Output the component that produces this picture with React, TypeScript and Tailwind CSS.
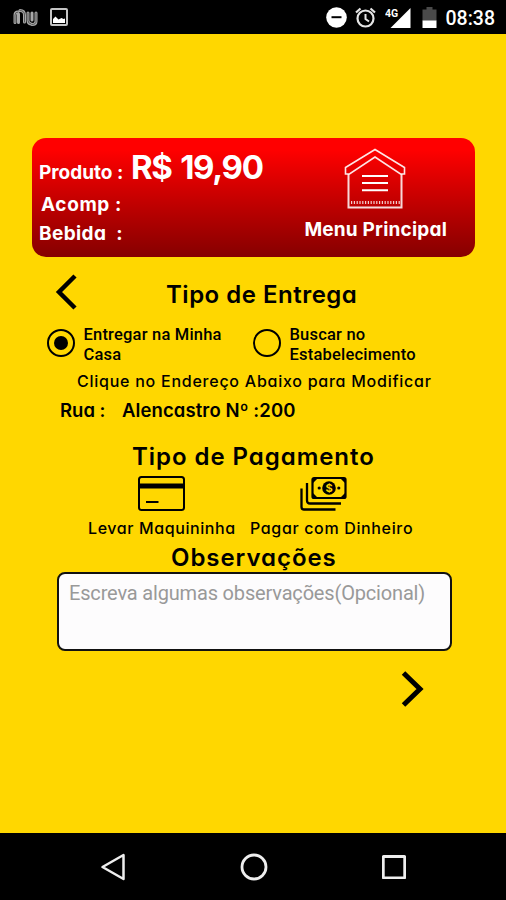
import { useState } from "react";

type Delivery = "casa" | "loja";

const DELIVERY_OPTIONS: { value: Delivery; lines: [string, string] }[] = [
  { value: "casa", lines: ["Entregar na Minha", "Casa"] },
  { value: "loja", lines: ["Buscar no", "Estabelecimento"] },
];

function StatusBar() {
  return (
    <header className="flex h-[34px] shrink-0 items-center bg-black pl-3 pr-[11px]">
      <svg className="mr-[11px] h-5 w-[27px]" viewBox="0 0 27 20" fill="none">
        <g strokeLinecap="round" strokeLinejoin="round">
          <path
            d="M3 15.500V8q0-3 3-3M8 3.500q4.500 0 4.500 4.500v7M6.500 15.500V7M16 6v7.500q0 3 3 3.500M24 6v8.500q0 3-4 3M20 6v7"
            stroke="#a8a8a8"
            strokeWidth="3"
          />
          <path
            d="M3 15.500V8q0-3 3-3M8 3.500q4.500 0 4.500 4.500v7M16 6v7.500q0 3 3 3.500M24 6v8.500q0 3-4 3"
            stroke="#444"
            strokeWidth="0.800"
          />
        </g>
      </svg>
      <svg className="size-[18px]" viewBox="0 0 18 18" fill="none">
        <rect x="1" y="1" width="16" height="16" rx="1" stroke="#c4c4c4" strokeWidth="2" />
        <path d="M3 15v-4l2.500-2.500 3 3 3-1.500 2 1 1.500-.5V15z" fill="#fff" />
      </svg>
      <div className="ml-auto flex items-center">
        <svg className="mr-2 size-[21px]" viewBox="0 0 21 21">
          <circle cx="10.500" cy="10.500" r="10.300" fill="#fff" />
          <path d="M5.500 10.200h10" stroke="#000" strokeWidth="2" />
        </svg>
        <svg className="mr-[9px] h-[21px] w-[21px]" viewBox="0 0 21 21" fill="none" stroke="#e5e5e5">
          <circle cx="10.500" cy="11.500" r="8" strokeWidth="2.200" />
          <path d="M10.500 7v5l3.500 2.500" strokeWidth="2" />
          <path d="M1 5.500 5.500 1.500M20 5.500l-4.500-4" strokeWidth="2.200" />
        </svg>
        <svg className="mr-[11px] h-[21px] w-[26px]" viewBox="0 0 26 21">
          <path d="M5.500 21 25.500 1v20z" fill="#fff" />
          <text
            x="0"
            y="9.500"
            fill="#fff"
            stroke="#000"
            strokeWidth="1"
            paintOrder="stroke"
            className="font-['Roboto',sans-serif] text-[10.500px] font-bold"
          >
            4G
          </text>
        </svg>
        <svg className="mr-[9px] h-[21px] w-[15px]" viewBox="0 0 15 21">
          <path d="M.5 2.500h4V0h6v2.500h4V14H.5z" fill="#4a4a4a" />
          <path d="M.5 13.500h14V21H.5z" fill="#fff" />
        </svg>
        <span className="mt-[3px] font-['Roboto',sans-serif] text-[19.500px] font-medium leading-none text-white">
          08:38
        </span>
      </div>
    </header>
  );
}

function HouseIcon() {
  return (
    <svg className="mr-0.5 h-[62px] w-[62px]" viewBox="0 0 62 62" fill="none" stroke="#fff" strokeWidth="1.600">
      <path d="M31 1.500 60.500 19.500v6.500H56.500L31 9 5.500 26H1.500v-6.500z" opacity=".9" />
      <path d="M4.500 26v33.500h53V26" strokeWidth="2" opacity=".85" />
      <path d="M18 28h26M18 35h26M18 42.300h26" strokeWidth="2" />
      <path d="M7 54.500h49" strokeWidth="3" strokeDasharray="1.200 1.600" opacity=".8" />
    </svg>
  );
}

function OrderCard() {
  return (
    <section className="ml-8 mr-[31px] flex h-[119px] justify-between rounded-[14px] bg-linear-to-b from-[#ff0000] from-10% to-[#860000] pl-[7px] pr-7 font-bold text-white">
      <div className="flex flex-col pt-3 text-[19px] leading-5">
        <div className="flex h-[34px] items-baseline leading-[34px]">
          <span className="w-[92px] whitespace-nowrap">Produto :</span>
          <span className="whitespace-nowrap text-[33px] tracking-[-1.300px] [word-spacing:2px]">
            R$ 19,90
          </span>
        </div>
        <span className="mt-[11px] whitespace-pre pl-0.5 tracking-[0.600px]">Acomp :</span>
        <span className="mt-[9px] whitespace-pre tracking-[0.400px]">Bebida  :</span>
      </div>
      <button type="button" className="flex flex-col items-center pt-2.5">
        <HouseIcon />
        <span className="mt-2.5 whitespace-nowrap text-[19px] leading-5 tracking-[0.200px]">
          Menu Principal
        </span>
      </button>
    </section>
  );
}

function CardIcon() {
  return (
    <svg className="h-[35px] w-[47px]" viewBox="0 0 47 35" fill="none" stroke="#000">
      <rect x="1" y="1" width="45" height="33" rx="2.500" strokeWidth="2" />
      <path d="M1 10h45" strokeWidth="5" />
      <path d="M8 26h12.500" strokeWidth="2" />
    </svg>
  );
}

function MoneyIcon() {
  return (
    <svg className="h-[35px] w-[47px]" viewBox="0 0 47 35" fill="none" stroke="#000" strokeWidth="2">
      <rect x="12.500" y="2" width="33" height="20" rx="1.500" strokeWidth="2.200" />
      <path d="M12 2h6l-6 6zM46 2v6l-6-6zM12 22v-6l6 6zM46 22h-6l6-6z" fill="#000" strokeWidth="0" />
      <circle cx="29" cy="12" r="6.800" fill="#000" stroke="none" />
      <text
        x="29"
        y="16"
        textAnchor="middle"
        fill="#ffd700"
        stroke="none"
        className="font-['Inter',sans-serif] text-[11px] font-bold"
      >
        $
      </text>
      <circle cx="19.200" cy="12" r="1.600" fill="#000" stroke="none" />
      <circle cx="38.800" cy="12" r="1.600" fill="#000" stroke="none" />
      <path d="M7 7v17.500q0 3 3 3h31" strokeWidth="2.300" />
      <path d="M1.500 12.500V31q0 2.500 2.500 2.500h31.500" strokeWidth="2.300" />
    </svg>
  );
}

function NavBar() {
  return (
    <nav className="flex h-[67px] shrink-0 items-center justify-between bg-black pl-[100px] pr-[100px]">
      <svg className="h-7 w-[25px]" viewBox="0 0 25 28" fill="none" stroke="#eee" strokeWidth="2.500">
        <path d="M2.500 14 23.500 2v24z" strokeLinejoin="round" />
      </svg>
      <svg className="size-7" viewBox="0 0 28 28" fill="none" stroke="#eee" strokeWidth="2.800">
        <circle cx="14" cy="14" r="12" />
      </svg>
      <svg className="size-6" viewBox="0 0 24 24" fill="none" stroke="#eee" strokeWidth="2.800">
        <rect x="1.300" y="1.500" width="21.400" height="21.400" rx=".5" />
      </svg>
    </nav>
  );
}

export default function App() {
  const [delivery, setDelivery] = useState<Delivery>("casa");
  const [notes, setNotes] = useState("");

  return (
    <div className="flex h-[900px] w-[506px] flex-col overflow-hidden bg-[#ffd700] font-['Inter',sans-serif] text-black [font-feature-settings:'cv11']">
      <StatusBar />
      <main className="flex flex-1 flex-col pt-[104px]">
        <OrderCard />

        <div className="mt-[17px] flex h-9 items-center pl-[55px]">
          <button type="button" aria-label="Voltar">
            <svg className="h-9 w-6" viewBox="0 0 24 36" fill="none" stroke="#000" strokeWidth="4.500">
              <path d="M20 2 4 18l16 16" />
            </svg>
          </button>
          <h2 className="ml-[87px] mt-1.5 whitespace-nowrap text-[24px] font-semibold leading-none tracking-[0.500px]">
            Tipo de Entrega
          </h2>
        </div>

        <div className="mt-[15px] grid grid-cols-[206px_1fr] pl-[47px]">
          {DELIVERY_OPTIONS.map((option) => (
            <button
              key={option.value}
              type="button"
              role="radio"
              aria-checked={delivery === option.value}
              onClick={() => setDelivery(option.value)}
              className="flex items-center text-left font-['Roboto',sans-serif] text-[16.500px] font-medium leading-[19.500px] tracking-[0.200px]"
            >
              <span className="mr-2 mt-[-3px] flex size-7 shrink-0 items-center justify-center rounded-full border-[2.500px] border-black">
                {delivery === option.value && <span className="size-3.5 rounded-full bg-black" />}
              </span>
              <span className="whitespace-nowrap pl-[0.500px]">
                {option.lines[0]}
                <br />
                {option.lines[1]}
              </span>
            </button>
          ))}
        </div>

        <p className="mt-[7px] whitespace-nowrap pl-[77px] text-[16px] font-medium leading-5 tracking-[0.750px]">
          Clique no Endereço Abaixo para Modificar
        </p>
        <p className="mt-[9px] flex whitespace-nowrap pl-[60px] text-[18.500px] font-semibold leading-5">
          <span className="w-[62px]">Rua :</span>
          <span className="tracking-[0.100px]">Alencastro Nº :200</span>
        </p>

        <h2 className="mt-[22px] whitespace-nowrap pl-[132px] text-[24px] font-semibold leading-[30px] tracking-[0.950px]">
          Tipo de Pagamento
        </h2>
        <div className="mt-1 flex pl-[88px] text-[16px] font-medium leading-5">
          <button type="button" className="flex w-[162px] flex-col items-start">
            <span className="pl-[50px]">
              <CardIcon />
            </span>
            <span className="mt-[7px] whitespace-nowrap tracking-[0.600px]">Levar Maquininha</span>
          </button>
          <button type="button" className="flex flex-col items-start">
            <span className="pl-[50px]">
              <MoneyIcon />
            </span>
            <span className="mt-[7px] whitespace-nowrap tracking-[0.650px]">Pagar com Dinheiro</span>
          </button>
        </div>

        <h2 className="mt-2 whitespace-nowrap pl-[171px] text-[24px] font-semibold leading-6 tracking-[0.950px]">
          Observações
        </h2>
        <textarea
          value={notes}
          onChange={(e) => setNotes(e.target.value)}
          placeholder="Escreva algumas observações(Opcional)"
          className="ml-[57px] mt-0.5 block h-[79px] w-[395px] shrink-0 resize-none overflow-hidden rounded-lg border-2 border-[#111] bg-[#fdfcfd] px-2.5 pt-[7px] font-['Roboto',sans-serif] text-[20px] leading-6 tracking-[-0.170px] outline-none placeholder:text-[#999]"
        />

        <button type="button" aria-label="Avançar" className="ml-[401px] mt-5 w-6">
          <svg className="h-9 w-6" viewBox="0 0 24 36" fill="none" stroke="#000" strokeWidth="5">
            <path d="M2.500 2 19 18 2.500 34" />
          </svg>
        </button>
      </main>
      <NavBar />
    </div>
  );
}
